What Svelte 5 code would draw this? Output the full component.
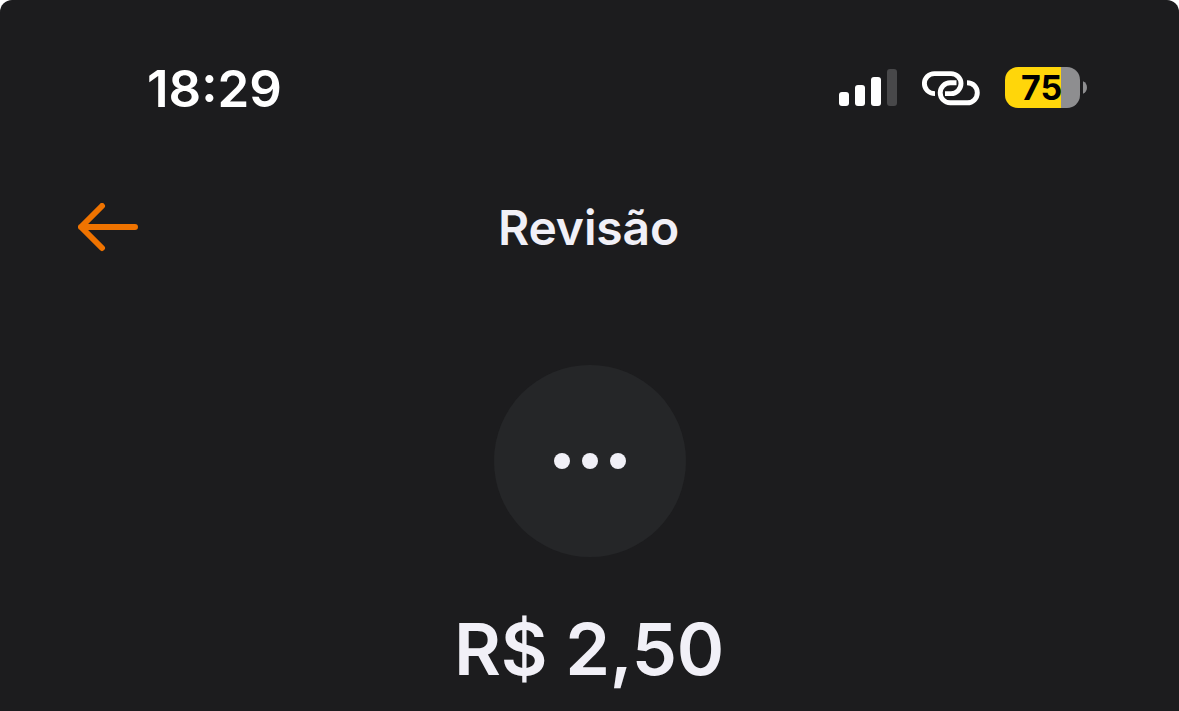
<script>
  let time = "18:29";
  let battery = 75;
  let title = "Revisão";
  let amount = "R$ 2,50";

  const bars = [
    { height: 14, active: true },
    { height: 21, active: true },
    { height: 29, active: true },
    { height: 37, active: false },
  ];
</script>

<div class="screen">
  <div class="status-bar">
    <span class="time">{time}</span>
    <div class="indicators">
      <div class="signal">
        {#each bars as bar}
          <span class="bar" class:active={bar.active} style="height: {bar.height}px"></span>
        {/each}
      </div>
      <svg class="link" width="60" height="36" viewBox="0 0 60 36" fill="none" stroke="#fff" stroke-width="4.9">
        <path d="M14 23.6C7.5 23.6 3.4 19 3.4 13.6C3.4 8 7.8 3.6 13.4 3.6H30A10 10 0 0 1 30 23.6H24" />
        <path d="M35.5 12.8H29.2A10 10 0 0 0 29.2 32.8H46.2C51.8 32.8 56.3 28.4 56.3 22.8C56.3 17.4 52.3 12.8 46 12.8" />
      </svg>
      <div class="battery">
        <div class="level" style="--level: {battery}%"><span>{battery}</span></div>
        <svg width="4" height="13" viewBox="0 0 4 13">
          <path d="M0 0.3C5.3 2.2 5.3 10.8 0 12.7Z" fill="#8e8e90" />
        </svg>
      </div>
    </div>
  </div>

  <header>
    <button class="back" aria-label="Voltar">
      <svg width="60" height="50" viewBox="0 0 60 50" fill="none" stroke="#ef7300" stroke-width="6" stroke-linecap="round" stroke-linejoin="round">
        <path d="M24 3L3 24L24 45M3 24H57" />
      </svg>
    </button>
    <h1>{title}</h1>
  </header>

  <main>
    <div class="avatar">
      <i></i>
      <i></i>
      <i></i>
    </div>
    <p class="amount">{amount}</p>
  </main>
</div>

<style>
  :global(body) {
    background: #fff;
    overflow: hidden;
  }

  .screen {
    box-sizing: border-box;
    height: 711px;
    background: #1c1c1e;
    border-radius: 12px 12px 0 0;
    color: #f1f0f7;
    font-family: Inter, "Liberation Sans", sans-serif;
    overflow: hidden;
  }

  .status-bar {
    display: flex;
    justify-content: space-between;
    align-items: center;
    height: 41px;
    padding: 67px 92px 0 147px;
    color: #fff;
  }

  .time {
    display: block;
    padding-top: 2px;
    font-size: 51px;
    font-weight: 600;
    line-height: 43px;
  }

  .indicators {
    display: flex;
    align-items: center;
  }

  .signal {
    display: flex;
    align-items: flex-end;
    gap: 6px;
    height: 37px;
  }

  .bar {
    width: 10px;
    border-radius: 3px;
    background: #48484a;
  }

  .bar.active {
    background: #fff;
  }

  .link {
    margin: 0 24px;
  }

  .battery {
    display: flex;
    align-items: center;
    gap: 3px;
  }

  .level {
    box-sizing: border-box;
    width: 75px;
    height: 41px;
    padding-left: 16px;
    border-radius: 13px;
    background: linear-gradient(to right, #ffd60a var(--level), #8e8e90 var(--level));
    color: #000;
    font-size: 34px;
    font-weight: 700;
    line-height: 42px;
  }

  header {
    display: grid;
    grid-template-columns: 60px 1fr 60px;
    align-items: center;
    height: 60px;
    padding: 90px 80px 0 78px;
  }

  .back {
    display: flex;
    padding: 0;
    border: none;
    background: none;
    cursor: pointer;
  }

  h1 {
    margin: 0;
    font-size: 48px;
    font-weight: 600;
    letter-spacing: -0.15px;
    line-height: 60px;
    text-align: center;
  }

  main {
    display: flex;
    flex-direction: column;
    align-items: center;
    padding-top: 107px;
  }

  .avatar {
    display: flex;
    justify-content: center;
    align-items: center;
    gap: 12px;
    width: 192px;
    height: 192px;
    border-radius: 50%;
    background: #252628;
  }

  .avatar i {
    width: 16px;
    height: 16px;
    border-radius: 50%;
    background: #f1f0f7;
  }

  .amount {
    margin: 48px 1px 0 0;
    font-size: 72px;
    font-weight: 600;
    letter-spacing: -0.25px;
    line-height: 88px;
  }
</style>
